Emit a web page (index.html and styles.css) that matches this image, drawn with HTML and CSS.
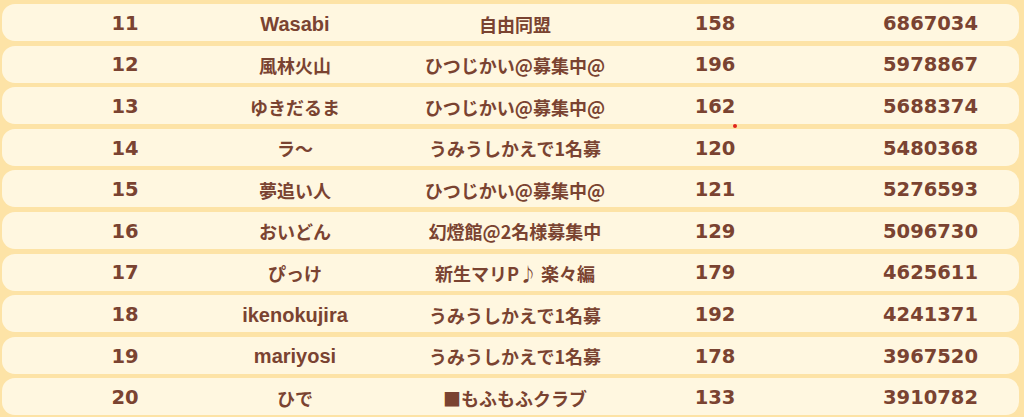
FILE: index.html
```html
<!DOCTYPE html>
<html lang="ja">
<head>
<meta charset="utf-8">
<title>ランキング</title>
<link rel="stylesheet" href="styles.css">
</head>
<body>
<div class="board">
  <div class="row"><span class="rank">11</span><span class="name">Wasabi</span><span class="guild">自由同盟</span><span class="level">158</span><span class="score">6867034</span></div>
  <div class="row"><span class="rank">12</span><span class="name jp">風林火山</span><span class="guild">ひつじかい@募集中@</span><span class="level">196</span><span class="score">5978867</span></div>
  <div class="row"><span class="rank">13</span><span class="name jp">ゆきだるま</span><span class="guild">ひつじかい@募集中@</span><span class="level">162<i class="dot"></i></span><span class="score">5688374</span></div>
  <div class="row"><span class="rank">14</span><span class="name jp">ラ～</span><span class="guild">うみうしかえで1名募</span><span class="level">120</span><span class="score">5480368</span></div>
  <div class="row"><span class="rank">15</span><span class="name jp">夢追い人</span><span class="guild">ひつじかい@募集中@</span><span class="level">121</span><span class="score">5276593</span></div>
  <div class="row"><span class="rank">16</span><span class="name jp">おいどん</span><span class="guild">幻燈館@2名様募集中</span><span class="level">129</span><span class="score">5096730</span></div>
  <div class="row"><span class="rank">17</span><span class="name jp">ぴっけ</span><span class="guild">新生マリP♪ 楽々編</span><span class="level">179</span><span class="score">4625611</span></div>
  <div class="row"><span class="rank">18</span><span class="name">ikenokujira</span><span class="guild">うみうしかえで1名募</span><span class="level">192</span><span class="score">4241371</span></div>
  <div class="row"><span class="rank">19</span><span class="name">mariyosi</span><span class="guild">うみうしかえで1名募</span><span class="level">178</span><span class="score">3967520</span></div>
  <div class="row"><span class="rank">20</span><span class="name jp">ひで</span><span class="guild">■もふもふクラブ</span><span class="level">133</span><span class="score">3910782</span></div>
</div>
</body>
</html>
```

FILE: styles.css
```css
html, body {
  margin: 0;
  padding: 0;
  background: #fde3a6;
}
body {
  width: 1024px;
  height: 417px;
  overflow: hidden;
}
.board {
  display: flex;
  flex-direction: column;
  gap: 4.6px;
  padding: 4px 5px 0 2px;
}
.row {
  display: grid;
  grid-template-columns: 154px 186px 254px 146px 1fr;
  justify-items: center;
  align-items: center;
  height: 37px;
  padding-left: 46px;
  background: #fff7e0;
  border-radius: 13px;
  color: #7a4331;
  font-weight: bold;
  line-height: 1;
  padding-top: 2px;
  box-sizing: border-box;
}
.rank, .level, .score {
  font-family: "DejaVu Sans", sans-serif;
  font-size: 19.5px;
}
.name {
  font-family: "Liberation Sans", "Noto Sans CJK JP", sans-serif;
  font-size: 20px;
}
.name.jp {
  font-family: "Noto Sans CJK JP", sans-serif;
  font-size: 18px;
}
.guild {
  font-family: "Noto Sans CJK JP", sans-serif;
  font-size: 18px;
}
.score {
  padding-left: 54px;
}
.level {
  position: relative;
}
.dot {
  position: absolute;
  left: 38px;
  top: 27px;
  width: 4px;
  height: 4px;
  border-radius: 50%;
  background: #e0241c;
}
```
